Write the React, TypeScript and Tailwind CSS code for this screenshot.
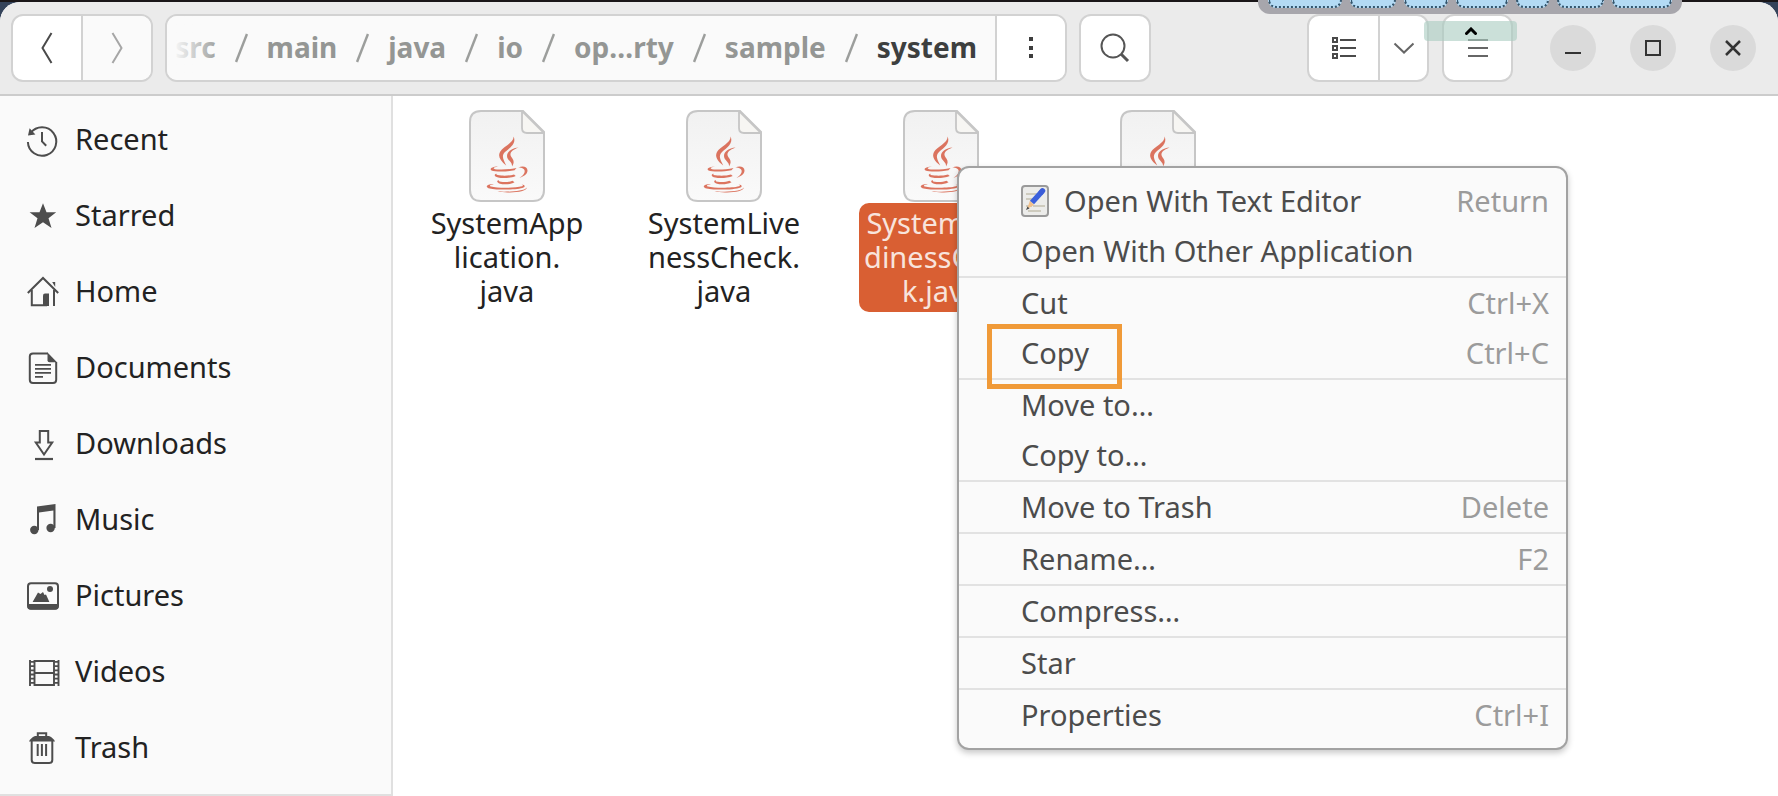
import React from "react";

type IconProps = { children: React.ReactNode };

function SideIcon({ children }: IconProps) {
  return (
    <svg
      className="h-8 w-8 shrink-0 overflow-visible text-[#4d4d4d]"
      viewBox="0 0 32 32"
      fill="none"
      stroke="currentColor"
      strokeWidth="2"
      aria-hidden="true"
    >
      {children}
    </svg>
  );
}

const places: { name: string; icon: React.ReactNode }[] = [
  {
    name: "Recent",
    icon: (
      <>
        <path d="M3.6 9.2A14.2 14.2 0 1 1 .9 18" />
        <path d="M2.6 4.2L1 11.6l7.4-1z" fill="currentColor" stroke="none" />
        <path d="M15 8v9.4l4.2 4.4" />
      </>
    ),
  },
  {
    name: "Starred",
    icon: (
      <path
        d="M16 3.2l3.5 9h9.7l-7.7 6 3 9.8-8.5-5.8L7.5 28l3-9.8-7.9-6h9.9z"
        fill="currentColor"
        stroke="none"
      />
    ),
  },
  {
    name: "Home",
    icon: (
      <>
        <path d="M.8 17L16 2l15.2 15" />
        <path d="M4.8 14v15.2H20M27 14v16" />
        <path d="M16 30V19.500q0-2 2-2h4V30z" fill="currentColor" stroke="none" />
        <path d="M25.200 6h3v5z" fill="currentColor" stroke="none" />
      </>
    ),
  },
  {
    name: "Documents",
    icon: (
      <>
        <path d="M21 1.400H6q-3.200 0-3.200 3.200v23.200q0 3.200 3.200 3.200h20q3.200 0 3.200-3.200V10" />
        <path d="M20.500.6L30 10.300h-7.500q-2 0-2-2z" fill="currentColor" stroke="none" />
        <path d="M8 12.800h16M8 16.800h16M8 20.800h16M8 24.800h8" strokeWidth="1.800" />
      </>
    ),
  },
  {
    name: "Downloads",
    icon: (
      <>
        <path d="M12.800 3h8.400v11.500h4L17 26.500 8.800 14.500h4z" />
        <path d="M8 31h18" strokeWidth="2.200" />
      </>
    ),
  },
  {
    name: "Music",
    icon: (
      <g fill="currentColor" stroke="none">
        <circle cx="7.300" cy="26" r="4.200" />
        <circle cx="23.600" cy="24" r="4.200" />
        <path d="M10 2.600L28.500 0v24h-2.100V6.500L12 8.500V26h-2z" />
      </g>
    ),
  },
  {
    name: "Pictures",
    icon: (
      <>
        <rect x="1" y="3.200" width="30" height="25.500" rx="3" />
        <g fill="currentColor" stroke="none">
          <path d="M.5 24h31v2.500q0 3-3 3h-25q-3 0-3-3z" />
          <path d="M5.600 22l5.400-9.500 2.500 1.500 2.500-2 1.500 3 1.500-.5L22.400 22z" />
          <circle cx="23" cy="9" r="3" />
        </g>
      </>
    ),
  },
  {
    name: "Videos",
    icon: (
      <>
        <path d="M7.500 4v26M27 4v26M3 4v26M31.500 4v26M7.500 5h19.500M7.500 17h19.500M7.500 29h19.500" strokeWidth="1.900" />
        <path d="M5.200 5v25M29.300 5v25" strokeWidth="4" strokeDasharray="1.800 2.400" />
      </>
    ),
  },
  {
    name: "Trash",
    icon: (
      <>
        <path d="M10.800 4V1.300h8.400V4" />
        <path d="M2 9.500q1.500-3.500 6-5.500h14q4.500 2 6 5.500z" fill="currentColor" stroke="none" />
        <path d="M4.700 9v19q0 3 3 3h14.600q3 0 3-3V9" />
        <path d="M10.700 12v12M14.900 12v12M19.100 12v12" />
      </>
    ),
  },
];

const crumbs = ["src", "main", "java", "io", "op…rty", "sample"];

const files = [
  { name: "SystemApp\nlication.\njava", selected: false },
  { name: "SystemLive\nnessCheck.\njava", selected: false },
  { name: "SystemRea\ndinessChec\nk.java", selected: true },
  { name: "", selected: false },
];

type Entry = { label: string; keys?: string; editor?: boolean; marked?: boolean };

const menu: Entry[][] = [
  [
    { label: "Open With Text Editor", keys: "Return", editor: true },
    { label: "Open With Other Application" },
  ],
  [
    { label: "Cut", keys: "Ctrl+X" },
    { label: "Copy", keys: "Ctrl+C", marked: true },
  ],
  [{ label: "Move to…" }, { label: "Copy to…" }],
  [{ label: "Move to Trash", keys: "Delete" }],
  [{ label: "Rename…", keys: "F2" }],
  [{ label: "Compress…" }],
  [{ label: "Star" }],
  [{ label: "Properties", keys: "Ctrl+I" }],
];

const group = "flex h-[68px] shrink-0 overflow-hidden rounded-xl border-2 border-[#d2d2d2] bg-white";
const center = "flex items-center justify-center";
const round = "flex h-[46px] w-[46px] items-center justify-center rounded-full bg-[#dadada]";

function HeaderBar() {
  return (
    <header className="flex h-[94px] items-center border-b-2 border-[#cccccc] bg-[#ebebeb] pr-[22px] pl-[11px]">
      <div className={group}>
        <button aria-label="Back" className={`${center} w-[68px]`}>
          <svg width="12" height="32" fill="none" stroke="#4a4a4a" strokeWidth="2">
            <path d="M10.500 1L1.500 16l9 15" />
          </svg>
        </button>
        <button aria-label="Forward" className={`${center} w-[70px] border-l-2 border-[#d2d2d2] bg-[#fafafa]`}>
          <svg width="12" height="32" fill="none" stroke="#a6a6a6" strokeWidth="2">
            <path d="M1.500 1l9 15-9 15" />
          </svg>
        </button>
      </div>

      <div className="ml-3 flex h-[68px] w-[902px] overflow-hidden rounded-xl border-2 border-[#d2d2d2] bg-[#fafafa]">
        <nav aria-label="Path" className="relative flex flex-1 items-center justify-end gap-[19px] overflow-hidden pr-[18px] text-[28px] font-bold text-[#949694]">
          {crumbs.map((c) => (
            <React.Fragment key={c}>
              <a href="#" className="pb-0.5">{c}</a>
              <svg className="shrink-0" width="13" height="30" stroke="#9c9e9c" strokeWidth="2.500" aria-hidden="true">
                <path d="M12 1L1 29" />
              </svg>
            </React.Fragment>
          ))}
          <a href="#" aria-current="page" className="pb-0.5 text-[#3d3f3f]">system</a>
          <span className="absolute inset-y-0 left-0 w-14 bg-gradient-to-r from-[#fafafa] from-10% to-transparent" />
        </nav>
        <button aria-label="Path options" className={`${center} w-[70px] border-l-2 border-[#d2d2d2] bg-white`}>
          <svg width="4" height="22" fill="#3d3d3d">
            <path d="M0 0h4v4H0zM0 9h4v4H0zM0 17h4v4H0z" />
          </svg>
        </button>
      </div>

      <div className={`${group} ml-3`}>
        <button aria-label="Search" className={`${center} w-[68px]`}>
          <svg width="30" height="30" fill="none" stroke="#555" strokeWidth="2">
            <circle cx="13" cy="13" r="11.500" />
            <path d="M21 21l7 7" strokeWidth="3" />
          </svg>
        </button>
      </div>

      <div className={`${group} ml-auto`}>
        <button aria-label="List view" className={`${center} w-[69px]`}>
          <svg width="26" height="24" fill="none" stroke="#4a4a4a" strokeWidth="2">
            <path d="M2 2h4v4H2zM2 10h4v4H2zM2 18h4v4H2zM9 4h16M9 12h16M9 20h16" />
          </svg>
        </button>
        <button aria-label="View options" className={`${center} w-[49px] border-l-2 border-[#d2d2d2]`}>
          <svg width="22" height="12" fill="none" stroke="#666" strokeWidth="2">
            <path d="M1.500 1.500l9.500 9 9.500-9" />
          </svg>
        </button>
      </div>
      <div className={`${group} ml-[13px]`}>
        <button aria-label="Menu" className={`${center} w-[67px]`}>
          <svg width="20" height="20" stroke="#666" strokeWidth="2">
            <path d="M0 2h20M0 10h20M0 18h20" />
          </svg>
        </button>
      </div>

      <div className="ml-[37px] flex gap-[34px]">
        <button aria-label="Minimize" className={round}>
          <svg width="16" height="16" stroke="#333" strokeWidth="2">
            <path d="M0 13h16" />
          </svg>
        </button>
        <button aria-label="Maximize" className={round}>
          <svg width="18" height="18" fill="none" stroke="#333" strokeWidth="2">
            <path d="M2 2h14v14H2z" />
          </svg>
        </button>
        <button aria-label="Close" className={round}>
          <svg width="16" height="16" fill="none" stroke="#333" strokeWidth="2.500">
            <path d="M1 1l14 14M15 1L1 15" />
          </svg>
        </button>
      </div>
    </header>
  );
}

function JavaFile() {
  return (
    <svg className="h-[92px] w-[76px]" viewBox="0 0 76 92" aria-hidden="true">
      <defs>
        <linearGradient id="sheet" x1="0" y1="0" x2="0" y2="1">
          <stop offset="0" stopColor="#f1f1f1" />
          <stop offset="1" stopColor="#fafafa" />
        </linearGradient>
      </defs>
      <path
        d="M12 1h42l21 21v58q0 11-11 11H12Q1 91 1 80V12Q1 1 12 1z"
        fill="url(#sheet)"
        stroke="#c6c6c6"
        strokeWidth="2"
      />
      <path d="M53 1v17q0 5 5 5h17z" fill="#f7f6f3" stroke="#c6c6c6" strokeWidth="1.800" strokeLinejoin="round" />
      <g fill="#d9664f" opacity="0.9">
        <path d="M44.600 26.500c3 7-3.600 11-8.600 15.500-4 4-1.500 7.500 1.200 13.500C31.500 51 28.500 46.500 31 42c3-5.500 14-9 13.600-15.500z" />
        <path d="M49.500 37.500c-6 2.500-8.300 4.500-8 7.500.3 3 5.800 5 1.500 11.500.8-4.500-5-6-5-10.500 0-4.500 5-8 11.500-8.500z" />
        <path d="M29 56.600c-3.500.6-5 1.400-4 2.100 2.500 1.300 14 1.300 22.500-.7l-2 2.300c-8 1.700-19.500 1.700-23 .2-2.500-1.600.5-3.700 6.500-3.900z" />
        <path d="M49.500 57.500c4-1.800 9-1 9 3 0 3.500-3.500 6-8 7.300 3.500-2 5.300-4.300 5.200-6.700-.1-2.600-2.600-3.300-6.200-3.600z" />
        <path d="M27.500 63.500c-1 1.300 1 1.900 5 2.100 4 .2 9 0 12.500-1.100l1.700 1.500c-5 2.200-13 2.600-17.500 1.600-4-1-4.500-2.900-1.700-4.100z" />
        <path d="M29.800 70c-.8 1.300.8 1.800 4 2 3.500.2 7-.1 9.700-1.200l2 1.500c-4 2.200-10.500 2.600-14.500 1.400-3.500-1.200-3.500-2.800-1.200-3.700z" />
        <path d="M25 74c-3.500.8-5.500 1.700-3 2.500 6 1.700 24 1.700 31-.2 1.600-.6.800-1.300-.5-1.800 3 .3 4.300 1.800 2 2.900-6 2.600-29 2.900-35 .8-4-1.800-.5-4.400 5.500-4.200z" />
        <path d="M58 77.500c-1 3.500-8 4.600-17 4.900-4.500.1-9-.1-12.500-.8 8 .3 26 .4 29.500-4.100z" />
      </g>
    </svg>
  );
}

function EditorIcon() {
  return (
    <svg className="mr-[15px] h-8 w-7 shrink-0" viewBox="0 0 28 32" aria-hidden="true">
      <rect x="1" y="1" width="26" height="30" rx="3" fill="#ececea" stroke="#9a9a9a" strokeWidth="2" />
      <path d="M5 9h12M5 14h9M5 21h6M12 21h12M7 26h13" stroke="#c4c0b0" strokeWidth="1.500" />
      <path d="M9 15.500l4 4.500-7 4z" fill="#f0c08c" />
      <path d="M6.500 21.500L5 25l3.500-1.500z" fill="#4a4a4a" />
      <path d="M11 17.500L20.500 7" stroke="#3a60dc" strokeWidth="5.500" />
      <path d="M20.500 7l1-1.200" stroke="#3a5cd8" strokeWidth="5.500" strokeLinecap="round" />
    </svg>
  );
}

function ContextMenu() {
  return (
    <div
      role="menu"
      className="absolute top-[166px] left-[957px] w-[611px] rounded-xl border-2 border-[#a2a2a2] bg-[#fafafa] py-2 text-[29px] text-[#4c4c4c] shadow-[0_3px_6px_rgba(0,0,0,0.22)]"
    >
      {menu.map((section, i) => (
        <div key={i} role="group" className="border-[#e2e2e2] not-first:border-t-2">
          {section.map((e) => (
            <button key={e.label} role="menuitem" className="relative flex h-[50px] w-full items-center pr-[17px] pl-[62px] text-left">
              {e.editor && <EditorIcon />}
              <span>{e.label}</span>
              {e.keys && <span className="ml-auto text-[#9b9b9b]">{e.keys}</span>}
              {e.marked && (
                <span className="absolute -top-1 left-[28px] h-[65px] w-[135px] border-[5px] border-[#f09a38]" />
              )}
            </button>
          ))}
        </div>
      ))}
    </div>
  );
}

function FloatingToolbar() {
  return (
    <>
      <div className="absolute top-0 left-[1258px] flex h-[14px] w-[424px] gap-2 rounded-b-xl bg-[#a7a6ac] px-[10px]">
        {["w-[74px]", "w-[47px]", "w-[44px]", "w-[52px]", "w-[33px]", "w-[48px]", "w-[60px]"].map((w, i) => (
          <span key={i} className={`${w} h-2 rounded-b-[10px] border-x-2 border-b-2 border-dotted border-[#34566e] bg-[#b3daf4]`} />
        ))}
      </div>
      <div className="absolute top-[21px] left-[1424px] flex h-5 w-[93px] items-center justify-center rounded bg-[#a9cbbf]/60">
        <svg width="12" height="8" fill="none" stroke="#000" strokeWidth="3" strokeLinecap="round">
          <path d="M1.500 6.500L6 2l4.500 4.500" />
        </svg>
      </div>
    </>
  );
}

export default function App() {
  return (
    <div className="relative flex min-h-screen flex-col overflow-hidden bg-[#34435a] font-['Noto_Sans','Open_Sans',sans-serif]">
      <div className="h-0.5 bg-[#1a1618]" />
      <div className="flex flex-1 flex-col overflow-hidden rounded-t-[20px] bg-white">
        <HeaderBar />
        <div className="flex flex-1">
          <aside className="w-[393px] shrink-0 border-r-2 border-b-2 border-[#e0e0e0] bg-[#fafafa] pt-[6px]">
            {places.map((p) => (
              <a key={p.name} href="#" className="flex h-[76px] items-center gap-4 pl-[27px] text-[29px] text-[#222]">
                <SideIcon>{p.icon}</SideIcon>
                <span className="pb-0.5">{p.name}</span>
              </a>
            ))}
          </aside>
          <main className="flex flex-1 items-start gap-[53px] pt-[14px] pl-8">
            {files.map((f, i) => (
              <figure key={i} className="flex w-[164px] shrink-0 flex-col items-center">
                <JavaFile />
                {f.name && (
                  <figcaption
                    className={`mt-px w-full rounded-[10px] pt-[3px] pb-1 text-center text-[29px] leading-[34px] whitespace-pre ${
                      f.selected ? "bg-[#d95f33] text-[#f8e4dc]" : "text-[#222]"
                    }`}
                  >
                    {f.name}
                  </figcaption>
                )}
              </figure>
            ))}
          </main>
        </div>
      </div>
      <FloatingToolbar />
      <ContextMenu />
    </div>
  );
}
